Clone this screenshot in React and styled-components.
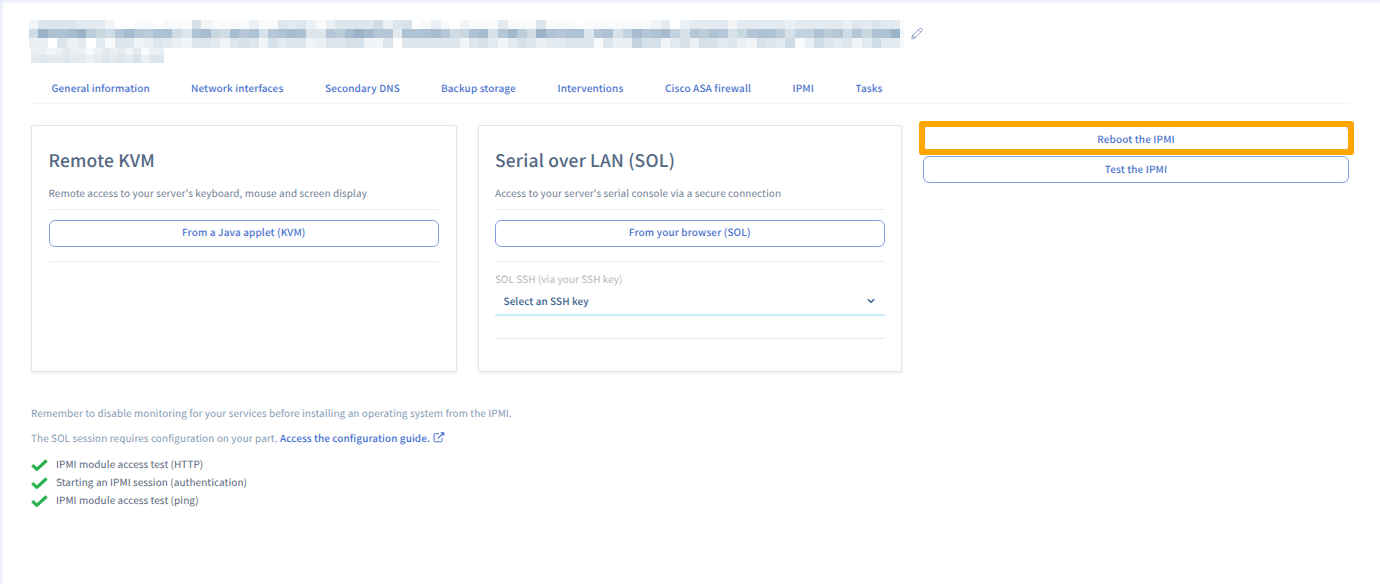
import React from "react";
import styled, { createGlobalStyle } from "styled-components";

const GlobalStyle = createGlobalStyle`
  * { box-sizing: border-box; }
  html, body { margin: 0; padding: 0; }
  body {
    background: #fff;
    font-family: "Noto Sans CJK SC", "Noto Sans", sans-serif;
    font-size: 9.95px;
    letter-spacing: 0.1px;
    text-rendering: geometricPrecision;
    color: #4d5592;
  }
`;

const Page = styled.main`
  height: 584px;
  overflow: hidden;
  padding: 20px 31px 0 31px;
  box-shadow: inset 3px 3px 3px -1px #e6ebf7;
`;

const Header = styled.header`
  display: flex;
  align-items: flex-start;
  height: 55px;
`;

const Redacted = styled.div`
  display: flex;
  flex-direction: column;
  width: 875px;
  overflow: hidden;
  margin-left: -2.3px;
`;

const PixelRow = styled.div`
  display: flex;
  height: ${(p) => p.$height}px;
  margin-left: ${(p) => p.$indent || 0}px;
`;

const Pixel = styled.i`
  flex: none;
  width: ${(p) => p.$width}px;
  background: rgb(
    ${(p) => Math.round(255 - p.$level * 6.75)},
    ${(p) => Math.round(255 - p.$level * 5.05)},
    ${(p) => Math.round(255 - p.$level * 3.7)}
  );
`;

const EditButton = styled.button`
  margin: 7px 0 0 7px;
  padding: 0;
  border: 0;
  background: none;
  line-height: 0;
`;

const Tabs = styled.nav`
  display: flex;
  height: 29px;
  padding-left: 20.5px;
  border-bottom: 1px solid #eef6fb;
`;

const Tab = styled.a`
  flex: none;
  width: ${(p) => p.$width}px;
  line-height: 26px;
  font-weight: 500;
  letter-spacing: 0.14px;
  white-space: nowrap;
  color: #4d74cf;
`;

const Columns = styled.div`
  display: grid;
  grid-template-columns: 425.5px 424.5px 426px;
  column-gap: 21px;
  padding-top: 21px;
`;

const Card = styled.section`
  height: 247px;
  padding: 21.5px 16.5px 0;
  border: 1px solid #e3e5ea;
  border-radius: 2px;
  box-shadow: 0 1px 3px rgba(60, 70, 90, 0.1);
`;

const CardTitle = styled.h2`
  margin: 0;
  font-size: 17.4px;
  line-height: 26px;
  font-weight: 500;
  letter-spacing: 0.22px;
  color: #536882;
`;

const CardText = styled.p`
  margin: 9px 0 0;
  height: 27.5px;
  line-height: 20px;
  color: #6f8093;
  border-bottom: 1px solid #ededf0;
`;

const Button = styled.button`
  display: block;
  width: 100%;
  height: 27px;
  padding: 0 0 ${(p) => (p.$plain ? 1 : 4)}px;
  border: 1px solid #839ee0;
  border-radius: 6px;
  background: #fff;
  font: inherit;
  font-weight: 500;
  letter-spacing: 0.15px;
  text-rendering: inherit;
  color: #4d74cf;
`;

const CardAction = styled.div`
  padding: 10px 0 14px;
  border-bottom: 1px solid #ededf0;
`;

const Field = styled.label`
  display: block;
  height: 77px;
  padding-top: 7px;
  border-bottom: 1px solid #e9ebee;
`;

const FieldLabel = styled.span`
  display: block;
  line-height: 20px;
  color: #b4b6b9;
`;

const Select = styled.span`
  display: flex;
  align-items: center;
  justify-content: space-between;
  height: 27px;
  padding: 0 10px 2px 8.5px;
  border-bottom: 2px solid #cdedfd;
  font-weight: 500;
  color: #3d628c;
`;

const Actions = styled.div`
  display: flex;
  flex-direction: column;
  gap: 3.5px;
`;

const Highlighted = styled.div`
  position: relative;
  &::after {
    content: "";
    position: absolute;
    inset: -4px -5px -3px -4px;
    border: 6px solid #ffa600;
    border-radius: 3px;
  }
`;

const Notes = styled.div`
  padding-top: 28px;
  color: #839ab4;
`;

const Note = styled.p`
  margin: 0;
  line-height: 25px;
`;

const GuideLink = styled.a`
  font-weight: 500;
  color: #4671d3;
  svg { margin-left: 3px; vertical-align: -1px; }
`;

const Checks = styled.ul`
  margin: 4.5px 0 0;
  padding: 0;
  list-style: none;
`;

const Check = styled.li`
  display: flex;
  align-items: center;
  gap: 8px;
  height: 18px;
  color: #56657a;
  svg { margin-top: 3px; }
`;

const TITLE_ROWS = [
  "25555444200110111621111311545313555573560131021114111511101111111240344442444443444443545441",
  "7FCCDFA87BDBACC75CD87DBC6BCDC55BADFDBB4CCCDB78CD6BEA7FCBCC5BC69DBCD96BACB68BCCA699CAB7B8CCF2",
  "33053404155235432554256526455235566225055555525642465344555153396624636645326547137545247441",
];
const TITLE_TAIL = ["33234331343424133", "45445443454546355"];

const tabs = [
  ["General information", 139.5],
  ["Network interfaces", 134],
  ["Secondary DNS", 116],
  ["Backup storage", 116.5],
  ["Interventions", 107.5],
  ["Cisco ASA firewall", 127.5],
  ["IPMI", 63],
  ["Tasks", 40],
];

const checks = [
  "IPMI module access test (HTTP)",
  "Starting an IPMI session (authentication)",
  "IPMI module access test (ping)",
];

function PixelLine({ levels, width, height, indent }) {
  return (
    <PixelRow $height={height} $indent={indent}>
      {[...levels].map((l, i) => (
        <Pixel key={i} $level={parseInt(l, 16)} $width={width} />
      ))}
    </PixelRow>
  );
}

const PencilIcon = () => (
  <svg width="12" height="13" viewBox="0 0 12 13" fill="none" stroke="#6c87a9" strokeWidth="0.8" strokeLinejoin="round">
    <path d="M.8 11.9 1.5 8.8 8.2 1.8C9 1 10 1.1 10.7 1.8 11.4 2.5 11.4 3.4 10.6 4.2L3.9 11.1Z M1.5 8.8C2.9 8.8 3.8 9.8 3.9 11.1 M7.4 2.7 9.6 5" />
  </svg>
);

const ChevronIcon = () => (
  <svg width="8" height="6" viewBox="0 0 8 6" fill="none" stroke="#3d628c" strokeWidth="1.5">
    <path d="M.8 1.2 4 4.2 7.2 1.2" />
  </svg>
);

const ExternalIcon = () => (
  <svg width="12" height="11" viewBox="0 0 12 11" fill="none" stroke="#4671d3" strokeWidth="1">
    <path d="M6 1.7H2.2Q1 1.7 1 2.9V8.6Q1 9.8 2.2 9.8H7.8Q9 9.8 9 8.6V6" />
    <path d="M4.9 6.4 9.8 1.7" strokeWidth="1.3" />
    <path d="M7.3.3H11.3V4.3Z" fill="#4671d3" stroke="none" />
  </svg>
);

const CheckIcon = () => (
  <svg width="17" height="13" viewBox="0 0 17 13" fill="none" stroke="#2bb14f" strokeWidth="3.2" strokeLinejoin="round">
    <path d="M1.3 6.2 5.8 10.4 15.6 1.5" />
  </svg>
);

export default function App() {
  return (
    <>
      <GlobalStyle />
      <Page>
        <Header>
          <Redacted>
            <PixelLine levels={TITLE_ROWS[0]} width={9.59} height={8.8} />
            <PixelLine levels={TITLE_ROWS[1]} width={9.59} height={9.6} />
            <PixelLine levels={TITLE_ROWS[2]} width={9.59} height={9.4} />
            <PixelLine levels={TITLE_TAIL[0]} width={7.84} height={7.2} indent={2.6} />
            <PixelLine levels={TITLE_TAIL[1]} width={7.84} height={8} indent={2.6} />
          </Redacted>
          <EditButton aria-label="Edit"><PencilIcon /></EditButton>
        </Header>
        <Tabs>
          {tabs.map(([label, width]) => (
            <Tab key={label} $width={width}>{label}</Tab>
          ))}
        </Tabs>
        <Columns>
          <Card>
            <CardTitle>Remote KVM</CardTitle>
            <CardText>Remote access to your server's keyboard, mouse and screen display</CardText>
            <CardAction><Button>From a Java applet (KVM)</Button></CardAction>
          </Card>
          <Card>
            <CardTitle>Serial over LAN (SOL)</CardTitle>
            <CardText>Access to your server's serial console via a secure connection</CardText>
            <CardAction><Button>From your browser (SOL)</Button></CardAction>
            <Field>
              <FieldLabel>SOL SSH (via your SSH key)</FieldLabel>
              <Select>Select an SSH key<ChevronIcon /></Select>
            </Field>
          </Card>
          <Actions>
            <Highlighted><Button $plain>Reboot the IPMI</Button></Highlighted>
            <Button $plain>Test the IPMI</Button>
          </Actions>
        </Columns>
        <Notes>
          <Note>Remember to disable monitoring for your services before installing an operating system from the IPMI.</Note>
          <Note>
            The SOL session requires configuration on your part.{" "}
            <GuideLink>Access the configuration guide.<ExternalIcon /></GuideLink>
          </Note>
          <Checks>
            {checks.map((text) => (
              <Check key={text}><CheckIcon />{text}</Check>
            ))}
          </Checks>
        </Notes>
      </Page>
    </>
  );
}
